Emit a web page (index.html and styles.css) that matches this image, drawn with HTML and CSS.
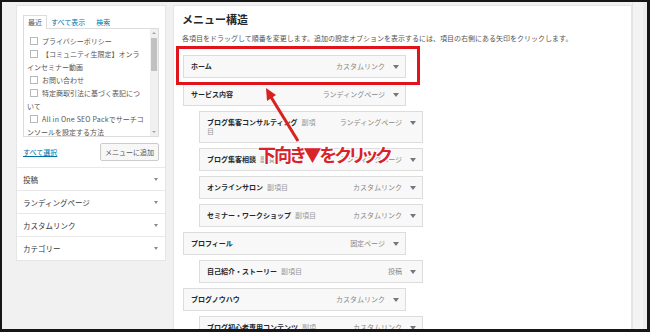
FILE: index.html
```html
<!DOCTYPE html>
<html lang="ja">
<head>
<meta charset="utf-8">
<title>メニュー構造</title>
<link rel="stylesheet" href="styles.css">
</head>
<body>
<div class="frame">
  <aside class="left">
    <div class="pages">
      <div class="tabs">
        <span class="tab active">最近</span>
        <span class="tab link">すべて表示</span>
        <span class="tab link">検索</span>
      </div>
      <div class="listbox">
        <ul class="checklist">
          <li><span class="cb"></span>プライバシーポリシー</li>
          <li><span class="cb"></span>【コミュニティ生限定】オンラインセミナー動画</li>
          <li><span class="cb"></span>お問い合わせ</li>
          <li><span class="cb"></span>特定商取引法に基づく表記について</li>
          <li><span class="cb"></span><span class="latin">All in One SEO Pack</span>でサーチコンソールを設定する方法</li>
        </ul>
        <div class="scrollbar">
          <span class="sb-up"></span>
          <span class="sb-thumb"></span>
          <span class="sb-down"></span>
        </div>
      </div>
      <div class="actions">
        <span class="selectall">すべて選択</span>
        <span class="button">メニューに追加</span>
      </div>
    </div>
    <div class="acc">投稿<span class="tri"></span></div>
    <div class="acc">ランディングページ<span class="tri"></span></div>
    <div class="acc">カスタムリンク<span class="tri"></span></div>
    <div class="acc">カテゴリー<span class="tri"></span></div>
  </aside>

  <main class="right">
    <h2 class="heading">メニュー構造</h2>
    <p class="desc">各項目をドラッグして順番を変更します。追加の設定オプションを表示するには、項目の右側にある矢印をクリックします。</p>
    <ul class="menu">
      <li class="item"><span class="title"><b>ホーム</b></span><span class="type">カスタムリンク</span><span class="arrow"></span></li>
      <li class="item"><span class="title"><b>サービス内容</b></span><span class="type">ランディングページ</span><span class="arrow"></span></li>
      <li class="item sub"><span class="title"><b>ブログ集客コンサルティング</b><span class="subl">副項目</span></span><span class="type">ランディングページ</span><span class="arrow"></span></li>
      <li class="item sub"><span class="title"><b>ブログ集客相談</b><span class="subl">副項目</span></span><span class="type">ランディングページ</span><span class="arrow"></span></li>
      <li class="item sub"><span class="title"><b>オンラインサロン</b><span class="subl">副項目</span></span><span class="type">カスタムリンク</span><span class="arrow"></span></li>
      <li class="item sub"><span class="title"><b>セミナー・ワークショップ</b><span class="subl">副項目</span></span><span class="type">カスタムリンク</span><span class="arrow"></span></li>
      <li class="item"><span class="title"><b>プロフィール</b></span><span class="type">固定ページ</span><span class="arrow"></span></li>
      <li class="item sub"><span class="title"><b>自己紹介・ストーリー</b><span class="subl">副項目</span></span><span class="type">投稿</span><span class="arrow"></span></li>
      <li class="item"><span class="title"><b>ブログノウハウ</b></span><span class="type">カスタムリンク</span><span class="arrow"></span></li>
      <li class="item sub"><span class="title"><b>ブログ初心者専用コンテンツ</b><span class="subl">副項目</span></span><span class="type">カスタムリンク</span><span class="arrow"></span></li>
    </ul>
  </main>

  <div class="strip"></div>

  <div class="highlight"></div>
  <svg class="pointer" width="650" height="332" viewBox="0 0 650 332">
    <line x1="298" y1="141" x2="271" y2="97" stroke="#d9211f" stroke-width="3"/>
    <polygon points="266,88 276,95 267,101" fill="#d9211f"/>
  </svg>
  <div class="note">下向き▼をクリック</div>
</div>
</body>
</html>
```

FILE: styles.css
```css
* { box-sizing: border-box; }

html, body {
  margin: 0;
  padding: 0;
  background: #111;
}

body {
  font-family: "Noto Sans CJK JP", "Noto Sans", sans-serif;
  font-size: 7px;
  color: #555;
}

ul { list-style: none; margin: 0; padding: 0; }

.frame {
  position: relative;
  width: 650px;
  height: 332px;
  border: 2px solid #161616;
  border-right-width: 3px;
  border-bottom-width: 3px;
  background: #f1f1f1;
  display: flex;
  align-items: flex-start;
  padding: 3px 0 0 14px;
  overflow: hidden;
}

/* ---------- left column ---------- */
.left {
  width: 150px;
  flex: none;
  background: #fff;
  border: 1px solid #e5e5e5;
}

.pages {
  padding: 9px 6px 6px 6px;
  border-bottom: 1px solid #e8e8e8;
}

.tabs {
  display: flex;
  align-items: flex-end;
  height: 13px;
  line-height: 12px;
}

.tab.active {
  border: 1px solid #dcdcdc;
  border-bottom: 0;
  padding: 0 4px;
  color: #555;
  background: #fff;
  position: relative;
  top: 1px;
  height: 14px;
}

.tab.link { color: #0073aa; }
.tab.link:nth-child(2) { margin-left: 4px; }
.tab.link:nth-child(3) { margin-left: 11px; }

.listbox {
  display: flex;
  height: 109px;
  border: 1px solid #dcdcdc;
  overflow: hidden;
}

.checklist {
  flex: 1;
  padding: 6px 4px 0 3px;
  line-height: 13px;
  color: #555;
}

.latin { letter-spacing: 0.2px; }

.cb {
  display: inline-block;
  width: 8px;
  height: 8px;
  border: 1px solid #b4b9be;
  background: #fff;
  margin: 0 4px 0 3px;
  vertical-align: -1px;
}

.scrollbar {
  width: 8px;
  flex: none;
  background: #f0f0f0;
  position: relative;
}

.sb-up, .sb-down {
  position: absolute;
  left: 2px;
  width: 0;
  height: 0;
  border-left: 2px solid transparent;
  border-right: 2px solid transparent;
}
.sb-up { top: 3px; border-bottom: 2px solid #a3a3a3; }
.sb-down { bottom: 3px; border-top: 2px solid #a3a3a3; }

.sb-thumb {
  position: absolute;
  left: 1px;
  right: 1px;
  top: 9px;
  height: 33px;
  background: #c1c1c1;
}

.actions {
  display: flex;
  justify-content: space-between;
  align-items: center;
  margin-top: 6px;
}

.selectall {
  color: #0073aa;
  text-decoration: underline;
}

.button {
  height: 18px;
  line-height: 16px;
  padding: 0 4px;
  border: 1px solid #cccccc;
  background: #f7f7f7;
  color: #555;
  border-radius: 2px;
}

.acc {
  display: flex;
  justify-content: space-between;
  align-items: center;
  height: 23px;
  padding: 0 7px 0 6px;
  font-size: 7.5px;
  color: #32373c;
  border-bottom: 1px solid #e8e8e8;
}
.acc:last-child { border-bottom: 0; }

.tri {
  width: 0;
  height: 0;
  border-left: 2.5px solid transparent;
  border-right: 2.5px solid transparent;
  border-top: 3px solid #8a8a8a;
}

/* ---------- right panel ---------- */
.right {
  width: 459px;
  flex: none;
  margin-left: 7px;
  height: 340px;
  background: #fff;
  border: 1px solid #e5e5e5;
  padding: 6px 0 0 8px;
}

.heading {
  margin: 0;
  font-size: 11px;
  line-height: 14px;
  font-weight: bold;
  color: #23282d;
}

.desc {
  margin: 7px 0 0 0;
  line-height: 10px;
  color: #555;
}

.menu {
  margin: 12px 0 0 1px;
}

.item {
  display: flex;
  align-items: flex-start;
  width: 223px;
  border: 1px solid #dcdcdc;
  background: #f8f8f8;
  padding: 6px 6px 6px 7px;
  line-height: 9px;
  margin-bottom: 5px;
}

.item.sub {
  margin-left: 16px;
  width: 224px;
}

.title {
  width: 113px;
  flex: none;
}

.title b {
  font-weight: bold;
  color: #23282d;
}

.subl {
  margin-left: 4px;
  color: #999;
}

.type {
  margin-left: auto;
  color: #888;
  white-space: nowrap;
}

.arrow {
  flex: none;
  margin: 3px 0 0 8px;
  width: 0;
  height: 0;
  border-left: 3px solid transparent;
  border-right: 3px solid transparent;
  border-top: 4px solid #72777c;
}

.strip {
  width: 15px;
  flex: none;
  align-self: stretch;
  margin-top: -3px;
  background: #f3f3f3;
  border-left: 1px solid #e4e4e4;
  border-right: 4px solid #ededed;
}

/* ---------- annotations ---------- */
.highlight {
  position: absolute;
  left: 174px;
  top: 44px;
  width: 244px;
  height: 39px;
  border: 3px solid #e0141b;
}

.pointer {
  position: absolute;
  left: -2px;
  top: -2px;
}

.note {
  position: absolute;
  left: 256px;
  top: 142px;
  font-size: 18px;
  line-height: 20px;
  font-weight: bold;
  letter-spacing: -2px;
  color: #d8232a;
  font-feature-settings: "palt";
  white-space: nowrap;
  text-shadow: 1px 0 0 #fff, -1px 0 0 #fff, 0 1px 0 #fff, 0 -1px 0 #fff,
               1px 1px 0 #fff, -1px -1px 0 #fff, 1px -1px 0 #fff, -1px 1px 0 #fff;
}
```
